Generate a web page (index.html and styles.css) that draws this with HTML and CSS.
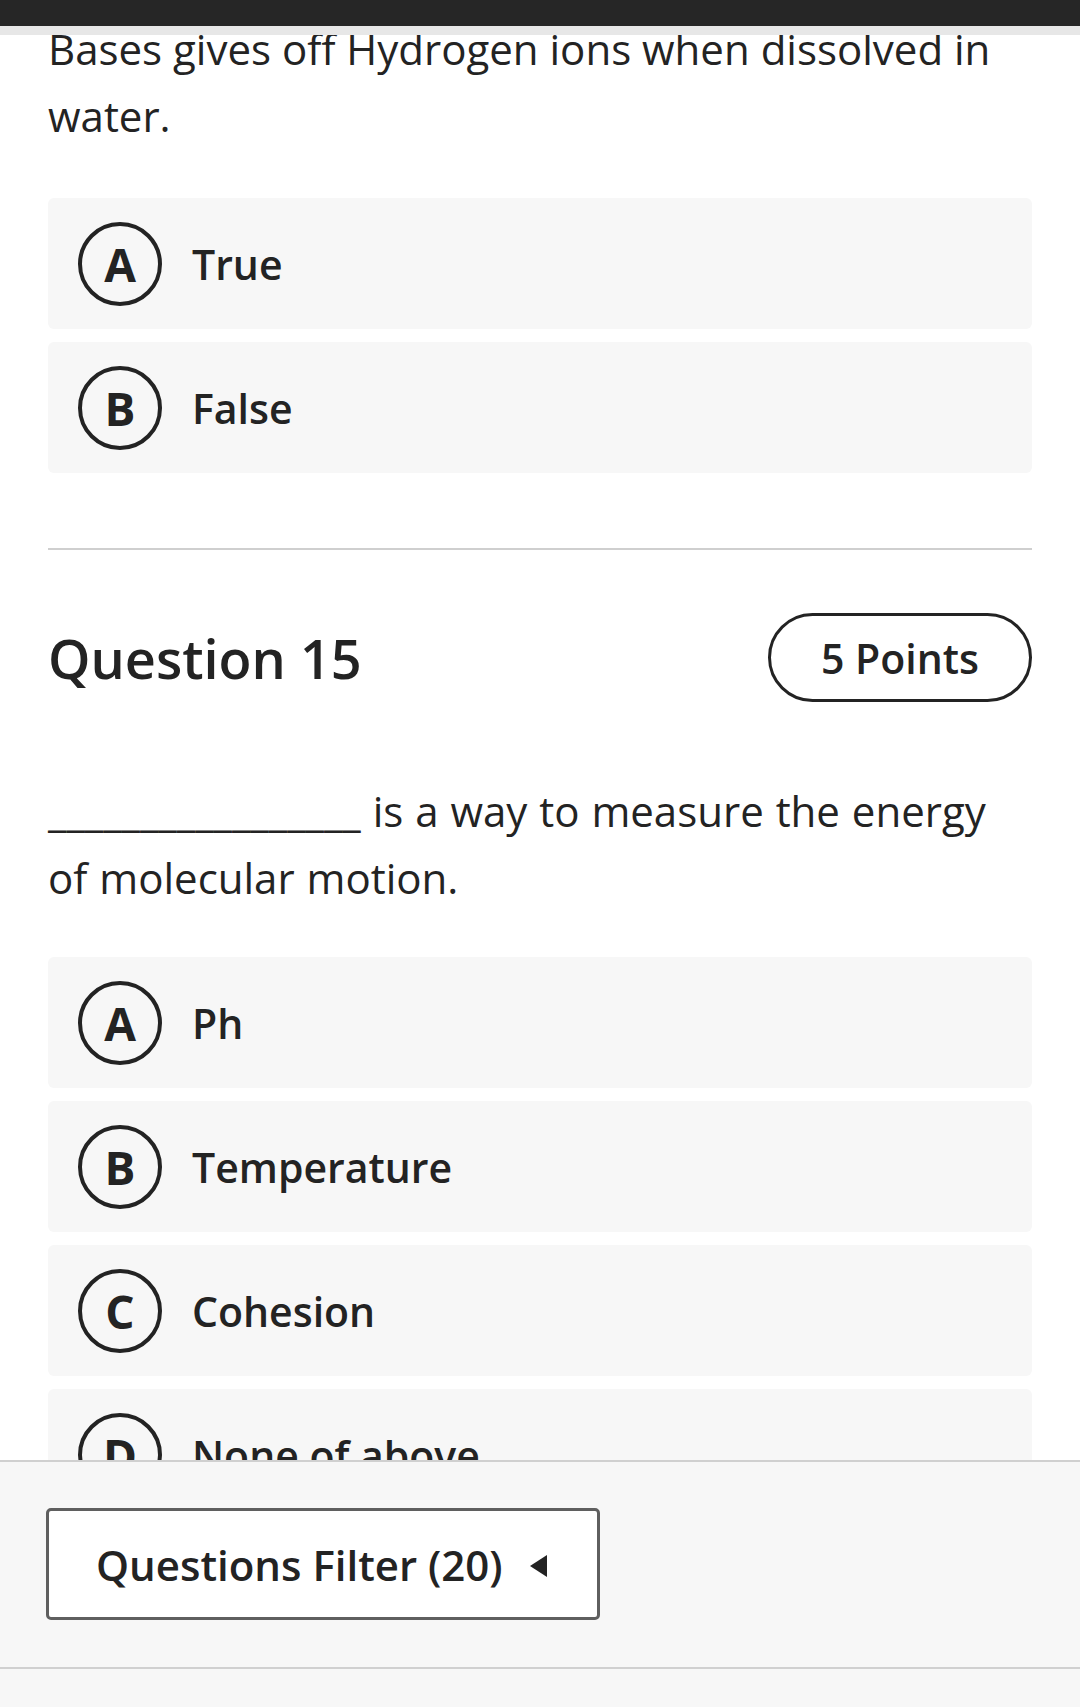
FILE: index.html
```html
<!DOCTYPE html>
<html lang="en">
<head>
<meta charset="utf-8">
<title>Quiz</title>
<link rel="stylesheet" href="styles.css">
</head>
<body>
<div class="topbar"></div>

<main class="content">
  <section class="question">
    <p class="question-text q1">Bases gives off Hydrogen ions when dissolved in water.</p>
    <div class="options">
      <div class="option"><span class="letter">A</span><span class="label">True</span></div>
      <div class="option"><span class="letter">B</span><span class="label">False</span></div>
    </div>
  </section>

  <hr class="divider">

  <section class="question">
    <div class="question-head">
      <h2 class="question-title">Question 15</h2>
      <span class="points">5 Points</span>
    </div>
    <p class="question-text q2">_________________ is a way to measure the energy of molecular motion.</p>
    <div class="options">
      <div class="option"><span class="letter">A</span><span class="label">Ph</span></div>
      <div class="option"><span class="letter">B</span><span class="label">Temperature</span></div>
      <div class="option"><span class="letter">C</span><span class="label">Cohesion</span></div>
      <div class="option"><span class="letter">D</span><span class="label">None of above</span></div>
    </div>
  </section>
</main>

<footer class="footer">
  <div class="filter-area">
    <button class="filter-btn" type="button">
      <span class="filter-label">Questions Filter (20)</span>
      <span class="caret"></span>
    </button>
  </div>
  <div class="footer-bottom"></div>
</footer>
</body>
</html>
```

FILE: styles.css
```css
* {
  box-sizing: border-box;
}

html, body {
  margin: 0;
  padding: 0;
  background: #ffffff;
  color: #232323;
  font-family: "Open Sans", "Noto Sans", "Liberation Sans", sans-serif;
}

body {
  height: 1707px;
  overflow: hidden;
}

.topbar {
  position: fixed;
  top: 0;
  left: 0;
  right: 0;
  height: 35px;
  background: #262626;
  border-bottom: 9px solid #e7e7e7;
  z-index: 10;
}

.content {
  padding: 15px 48px 0 48px;
}

.question-text {
  margin: 0;
  font-size: 42px;
  line-height: 67px;
  font-weight: 400;
  color: #232323;
}

.q2 {
  margin-top: 75px;
  padding-right: 20px;
  word-spacing: 1px;
}

.options {
  margin-top: 49px;
  display: flex;
  flex-direction: column;
  gap: 13px;
}

.q2 + .options {
  margin-top: 46px;
}

.option {
  height: 131px;
  background: #f7f7f7;
  border-radius: 6px;
  display: flex;
  align-items: center;
  padding-left: 30px;
}

.letter {
  width: 84px;
  height: 84px;
  border: 4px solid #232323;
  border-radius: 50%;
  display: flex;
  align-items: center;
  justify-content: center;
  font-size: 46px;
  font-weight: 700;
  line-height: 1;
  flex-shrink: 0;
}

.label {
  margin-left: 30px;
  font-size: 41px;
  font-weight: 600;
}

.divider {
  margin: 75px 0 0 0;
  border: 0;
  height: 2px;
  background: #cfcfcf;
}

.question-head {
  margin-top: 63px;
  display: flex;
  align-items: center;
  justify-content: space-between;
  height: 89px;
}

.question-title {
  margin: 0;
  font-size: 54px;
  font-weight: 600;
  color: #232323;
}

.points {
  width: 264px;
  height: 89px;
  border: 3px solid #232323;
  border-radius: 45px;
  display: flex;
  align-items: center;
  justify-content: center;
  font-size: 41px;
  font-weight: 600;
}

.footer {
  position: fixed;
  left: 0;
  right: 0;
  bottom: 0;
  height: 247px;
  background: #f7f7f7;
  border-top: 2px solid #d0d0d0;
  z-index: 10;
}

.filter-area {
  padding: 46px 0 0 46px;
  height: 205px;
}

.filter-btn {
  width: 554px;
  height: 112px;
  background: #ffffff;
  border: 3px solid #5f5f5f;
  border-radius: 5px;
  display: flex;
  align-items: center;
  padding: 0 0 0 47px;
  margin: 0;
  font-family: inherit;
  color: #232323;
  cursor: pointer;
}

.filter-label {
  font-size: 42px;
  font-weight: 600;
}

.caret {
  margin-left: 27px;
  margin-top: 4px;
  width: 0;
  height: 0;
  border-right: 17px solid #232323;
  border-top: 11px solid transparent;
  border-bottom: 11px solid transparent;
}

.footer-bottom {
  border-top: 2px solid #d0d0d0;
  height: 40px;
}
```
